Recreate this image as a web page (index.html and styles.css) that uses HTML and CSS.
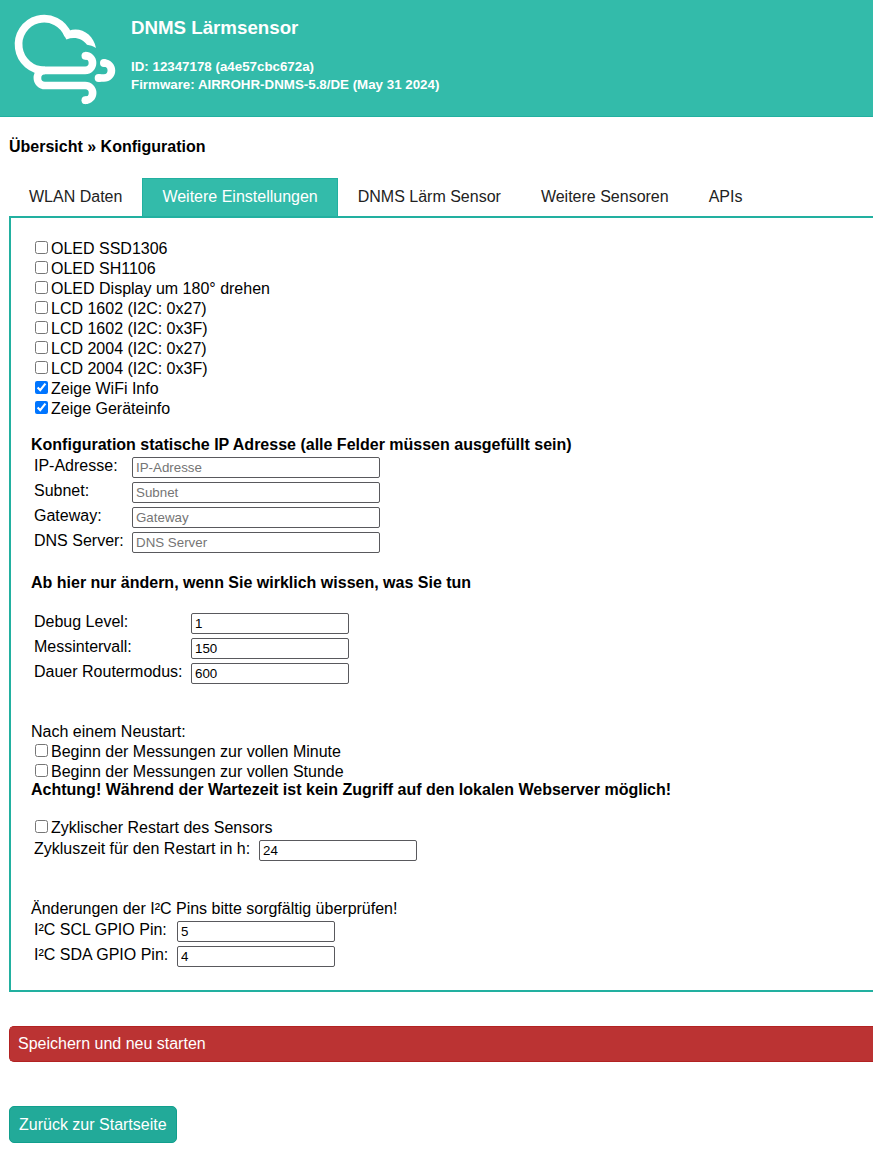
FILE: index.html
```html
<!DOCTYPE html>
<html lang="de">
<head>
<meta charset="utf-8">
<title>DNMS Lärmsensor</title>
<link rel="stylesheet" href="styles.css">
</head>
<body>
<header class="header">
  <svg class="logo" viewBox="0 0 117 117" fill="none" stroke="#fff" stroke-width="7.7">
    <path d="M68 35.1A25.6 25.8 0 1 0 44.8 70.3H85.2A7.3 7.3 0 0 0 85.2 55.7" />
    <path d="M64.2 35.6L68.8 30.7C81 26.5 93.5 34.5 96 48C93 46 90 45.2 87 44.8C82.5 38.3 74.5 36.2 66.4 39.4Z" fill="#fff" stroke="none" />
    <path d="M45 70.3A7.6 7.6 0 0 0 45 85.5H85.2A7.4 7.4 0 0 1 85.2 100.3" />
    <path d="M98.6 78H103.9A7.5 7.5 0 0 0 103.9 63" />
    <g fill="#fff" stroke="none">
      <circle cx="85.4" cy="55.8" r="3.9" /><circle cx="85.4" cy="100.2" r="3.9" />
      <circle cx="98.6" cy="78" r="3.9" /><circle cx="103.9" cy="63" r="3.9" />
    </g>
  </svg>
  <div class="device">
    <h1 class="title">DNMS Lärmsensor</h1>
    <div class="meta">ID: 12347178 (a4e57cbc672a)<br>Firmware: AIRROHR-DNMS-5.8/DE (May 31 2024)</div>
  </div>
</header>
<main class="content">
  <h2 class="crumb">Übersicht » Konfiguration</h2>
  <nav class="tabs">
    <a class="tab">WLAN Daten</a><a class="tab active">Weitere Einstellungen</a><a class="tab">DNMS Lärm Sensor</a><a class="tab">Weitere Sensoren</a><a class="tab">APIs</a>
  </nav>
  <form class="panel">
    <label class="check"><input type="checkbox">OLED SSD1306</label>
    <label class="check"><input type="checkbox">OLED SH1106</label>
    <label class="check"><input type="checkbox">OLED Display um 180° drehen</label>
    <label class="check"><input type="checkbox">LCD 1602 (I2C: 0x27)</label>
    <label class="check"><input type="checkbox">LCD 1602 (I2C: 0x3F)</label>
    <label class="check"><input type="checkbox">LCD 2004 (I2C: 0x27)</label>
    <label class="check"><input type="checkbox">LCD 2004 (I2C: 0x3F)</label>
    <label class="check"><input type="checkbox" checked>Zeige WiFi Info</label>
    <label class="check"><input type="checkbox" checked>Zeige Geräteinfo</label>

    <b class="line ip-title">Konfiguration statische IP Adresse (alle Felder müssen ausgefüllt sein)</b>
    <div class="fields ip">
      <label>IP-Adresse:</label><input type="text" placeholder="IP-Adresse">
      <label>Subnet:</label><input type="text" placeholder="Subnet">
      <label>Gateway:</label><input type="text" placeholder="Gateway">
      <label>DNS Server:</label><input type="text" placeholder="DNS Server">
    </div>

    <b class="line expert-title">Ab hier nur ändern, wenn Sie wirklich wissen, was Sie tun</b>
    <div class="fields expert">
      <label>Debug Level:</label><input type="text" value="1">
      <label>Messintervall:</label><input type="text" value="150">
      <label>Dauer Routermodus:</label><input type="text" value="600">
    </div>

    <div class="line restart-title">Nach einem Neustart:</div>
    <label class="check"><input type="checkbox">Beginn der Messungen zur vollen Minute</label>
    <label class="check"><input type="checkbox">Beginn der Messungen zur vollen Stunde</label>
    <b class="line warning">Achtung! Während der Wartezeit ist kein Zugriff auf den lokalen Webserver möglich!</b>

    <label class="check cyclic"><input type="checkbox">Zyklischer Restart des Sensors</label>
    <div class="fields cycle">
      <label>Zykluszeit für den Restart in h:</label><input type="text" value="24">
    </div>

    <div class="line pins-title">Änderungen der I²C Pins bitte sorgfältig überprüfen!</div>
    <div class="fields pins">
      <label>I²C SCL GPIO Pin:</label><input type="text" value="5">
      <label>I²C SDA GPIO Pin:</label><input type="text" value="4">
    </div>
  </form>
  <button class="save">Speichern und neu starten</button>
  <a class="back">Zurück zur Startseite</a>
</main>
</body>
</html>
```
FILE: styles.css
```css
* { box-sizing: border-box; }
body {
  margin: 0;
  font: 16px/20px "Liberation Sans", Arial, sans-serif;
  color: #000;
  background: #fff;
  overflow: hidden;
}
.header {
  display: flex;
  height: 117px;
  background: #33bbaa;
  border-bottom: 1px solid #22b0a0;
  color: #fff;
}
.logo { width: 117px; height: 117px; flex: none; }
.device { padding: 17px 0 0 14px; }
.title { margin: 0; font-size: 18.72px; line-height: 21px; font-weight: bold; }
.meta { margin-top: 20px; font-size: 13.333px; line-height: 18px; font-weight: bold; }
.content { display: flow-root; padding-left: 9px; }
.crumb { margin: 20px 0 0; font-size: 16px; line-height: 20px; font-weight: bold; }
.tabs { display: flex; height: 38px; margin-top: 21px; }
.tab { padding: 9px 20px 0; color: #222; white-space: nowrap; }
.tab.active { background: #33bbaa; border: 1px solid #22b0a0; border-bottom: 0; padding: 8px 19px 0; color: #fff; }
.panel {
  display: block;
  height: 776px;
  padding: 20px;
  border: 2px solid #22b0a0;
  border-right: 0;
}
.check { display: flex; height: 20px; line-height: 22px; }
.check input { width: 13px; height: 13px; margin: 3px 3px 0 4px; }
.line { display: block; height: 18px; white-space: nowrap; }
.fields {
  display: grid;
  grid-auto-rows: 21px;
  row-gap: 4px;
  padding-left: 3px;
}
.fields label { margin-top: -1px; white-space: nowrap; }
.fields input {
  width: 158px;
  height: 21px;
  padding: 2px 3px;
  border: 1px solid #59595d;
  border-radius: 2px;
  font: 13.333px "Liberation Sans", Arial, sans-serif;
}
.ip { grid-template-columns: 98px 248px; margin-top: 4px; }
.ip input { width: 248px; }
.expert { grid-template-columns: 157px 158px; margin-top: 22px; }
.cycle { grid-template-columns: 225px 158px; margin-top: 3px; }
.pins { grid-template-columns: 143px 158px; margin-top: 4px; }
.ip-title { margin-top: 17px; }
.expert-title { margin-top: 20px; }
.restart-title { margin: 38px 0 1px; }
.warning { margin-top: -1px; }
.cyclic { margin-top: 19px; }
.pins-title { margin-top: 38px; }
.save {
  display: block;
  width: 100%;
  height: 36px;
  margin-top: 34px;
  padding: 0 8px;
  border: 1px solid #b22222;
  border-right: 0;
  border-radius: 5px 0 0 5px;
  background: #bb3333;
  color: #fff;
  font: 16px/18px "Liberation Sans", Arial, sans-serif;
  text-align: left;
}
.back {
  display: block;
  width: 168px;
  height: 37px;
  margin-top: 44px;
  padding: 8px 9px;
  border: 1px solid #119f8d;
  border-radius: 5px;
  background: #22aa99;
  color: #fff;
  white-space: nowrap;
}
```
